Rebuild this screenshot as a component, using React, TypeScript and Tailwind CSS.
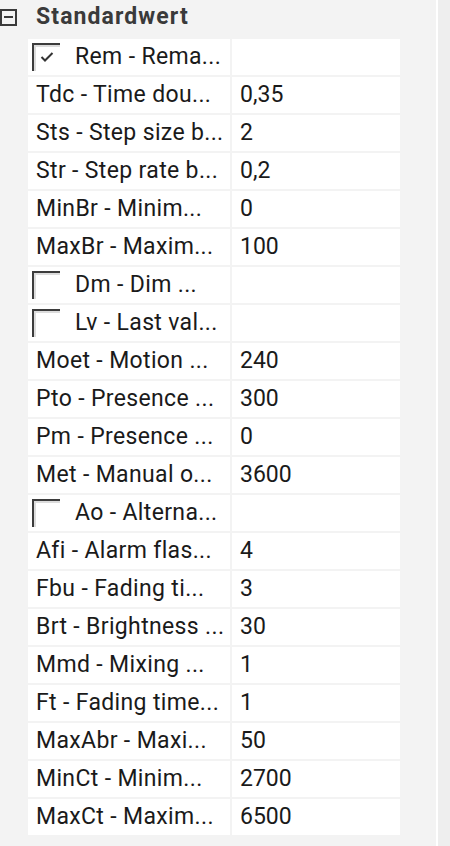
import React from 'react'

type Row = {
  name: string
  value?: string
  check?: boolean
}

const rows: Row[] = [
  { name: 'Rem - Rema...', check: true },
  { name: 'Tdc - Time dou...', value: '0,35' },
  { name: 'Sts - Step size b...', value: '2' },
  { name: 'Str - Step rate b...', value: '0,2' },
  { name: 'MinBr - Minim...', value: '0' },
  { name: 'MaxBr - Maxim...', value: '100' },
  { name: 'Dm - Dim ...', check: false },
  { name: 'Lv - Last val...', check: false },
  { name: 'Moet - Motion ...', value: '240' },
  { name: 'Pto - Presence ...', value: '300' },
  { name: 'Pm - Presence ...', value: '0' },
  { name: 'Met - Manual o...', value: '3600' },
  { name: 'Ao - Alterna...', check: false },
  { name: 'Afi - Alarm flas...', value: '4' },
  { name: 'Fbu - Fading ti...', value: '3' },
  { name: 'Brt - Brightness ...', value: '30' },
  { name: 'Mmd - Mixing ...', value: '1' },
  { name: 'Ft - Fading time...', value: '1' },
  { name: 'MaxAbr - Maxi...', value: '50' },
  { name: 'MinCt - Minim...', value: '2700' },
  { name: 'MaxCt - Maxim...', value: '6500' },
]

function CheckBox({ checked }: { checked: boolean }) {
  return (
    <div className="relative w-[28px] h-[28px] shrink-0 border-t-2 border-l-2 border-[#3c3c3c]">
      <div className="absolute inset-0 border-t-2 border-l-2 border-[#dcdcdc]" />
      {checked && (
        <svg className="absolute left-[6px] top-[6px]" width="14" height="12" viewBox="0 0 14 12">
          <path d="M1.5 6 L5 9.5 L12.5 2" fill="none" stroke="#333" strokeWidth="2" />
        </svg>
      )}
    </div>
  )
}

export default function App() {
  return (
    <div
      className="flex w-[450px] h-[846px] bg-[#f3f3f3] text-[23px] text-[#1a1a1a] overflow-hidden"
      style={{ fontFamily: 'Roboto, "Noto Sans", sans-serif' }}
    >
      <div className="w-[436px] shrink-0">
        {/* Kategorie */}
        <div className="flex items-center h-[37px]">
          <div className="w-[17px] h-[17px] border-2 border-[#3a3a3a] flex items-center justify-center -mt-[3px]">
            <div className="w-[9px] h-[2px] bg-[#3a3a3a]" />
          </div>
          <span className="ml-[19px] -mt-[4px] font-bold text-[#3a3a3a] leading-none tracking-[1.1px]">
            Standardwert
          </span>
        </div>

        <div className="flex flex-col gap-[2px] pl-[28px] pt-[2px]">
          {rows.map((row) => (
            <div key={row.name} className="flex gap-[2px] h-[36px]">
              <div className="w-[202px] bg-white flex items-center pl-[4px] tracking-[0.35px] overflow-hidden">
                {row.check !== undefined ? (
                  <>
                    <CheckBox checked={row.check} />
                    <span className="ml-[15px] whitespace-nowrap">{row.name}</span>
                  </>
                ) : (
                  <span className="ml-[4px] whitespace-nowrap">{row.name}</span>
                )}
              </div>
              <div className="w-[168px] bg-white flex items-center pl-[8px] whitespace-nowrap">
                {row.value}
              </div>
            </div>
          ))}
        </div>
      </div>
      <div className="w-[2px] shrink-0 bg-white" />
      <div className="flex-1 bg-[#eeeeee]" />
    </div>
  )
}
